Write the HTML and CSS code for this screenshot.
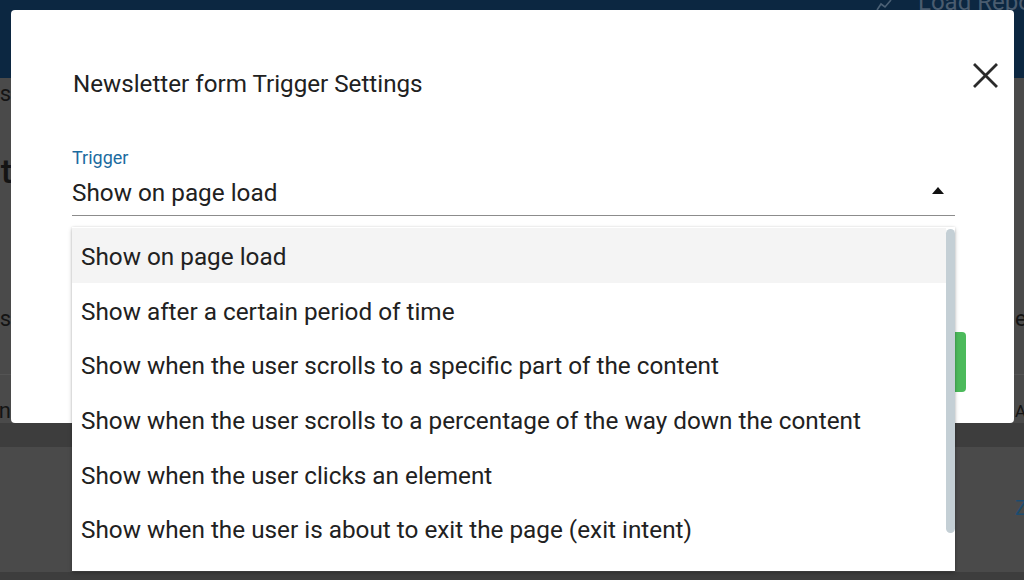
FILE: index.html
```html
<!DOCTYPE html>
<html lang="en">
<head>
<meta charset="utf-8">
<title>Newsletter form Trigger Settings</title>
<link rel="stylesheet" href="styles.css">
</head>
<body>
<div class="app">
  <header class="topbar">
    <svg class="report-icon" width="16" height="12" viewBox="0 0 16 12"><path d="M1 11 L5 5 L9 8 L15 1" fill="none" stroke="#4c6176" stroke-width="1.6"/></svg>
    <span class="report-text">Load Report</span>
  </header>
  <main class="content">
    <div class="row row-a"><span class="cut-left">Actions</span></div>
    <div class="row row-b"><span class="cut-left big">Content</span></div>
    <div class="row row-c"><span class="cut-left">Analysis</span><span class="cut-right">edit</span></div>
    <div class="row row-d"><span class="cut-left">Design</span><span class="cut-right small">All</span></div>
    <div class="band"></div>
    <div class="row row-e"><span class="spacer"></span><span class="cut-right link">Zoom</span></div>
    <div class="band bottom"></div>
  </main>
</div>

<div class="modal">
  <h2 class="modal-title">Newsletter form Trigger Settings</h2>
  <button class="close" aria-label="Close">
    <svg width="25" height="25" viewBox="0 0 25 25"><path d="M2 2 L23 23 M23 2 L2 23" stroke="#2b2b2b" stroke-width="2.8" stroke-linecap="square"/></svg>
  </button>
  <div class="field">
    <label class="field-label">Trigger</label>
    <div class="select">
      <span class="select-value">Show on page load</span>
      <span class="arrow"></span>
    </div>
    <div class="menu">
      <ul class="menu-list">
        <li class="menu-item active">Show on page load</li>
        <li class="menu-item">Show after a certain period of time</li>
        <li class="menu-item">Show when the user scrolls to a specific part of the content</li>
        <li class="menu-item">Show when the user scrolls to a percentage of the way down the content</li>
        <li class="menu-item">Show when the user clicks an element</li>
        <li class="menu-item">Show when the user is about to exit the page (exit intent)</li>
      </ul>
      <div class="scroll-track"><div class="scroll-thumb"></div></div>
    </div>
  </div>
  <div class="modal-footer">
    <button class="save">Save</button>
  </div>
</div>
</body>
</html>
```

FILE: styles.css
```css
* { box-sizing: border-box; }
html, body { margin: 0; padding: 0; }
body {
  width: 1024px;
  height: 580px;
  overflow: hidden;
  font-family: Roboto, "Liberation Sans", Arial, sans-serif;
  background: #4a4a4a;
  position: relative;
}
.app { display: flex; flex-direction: column; height: 580px; }
.topbar {
  height: 78px;
  background: #0c2741;
  display: flex;
  justify-content: flex-end;
  align-items: flex-start;
  gap: 26px;
  overflow: hidden;
}
.report-icon { margin-top: -1px; }
.report-text {
  font-size: 24px;
  line-height: 24px;
  color: #4a5c6f;
  margin-top: -10px;
  white-space: nowrap;
  width: 106px;
  overflow: hidden;
}
.content { flex: 1; display: flex; flex-direction: column; }
.row {
  display: flex;
  justify-content: space-between;
  align-items: flex-start;
  color: #141414;
  font-size: 22px;
  line-height: 26px;
}
.row-a { height: 62px; padding-top: 3px; }
.row-b { height: 88px; padding-top: 14px; }
.row-c { height: 147px; padding-top: 78px; border-bottom: 1px solid #545454; }
.row-d { height: 48px; padding-top: 23px; }
.row-e { height: 125px; padding-top: 48px; }
.band { height: 24px; background: #3d3d3d; }
.band.bottom { height: 8px; flex: 1; }
.cut-left {
  width: 11px;
  overflow: hidden;
  display: flex;
  justify-content: flex-end;
  white-space: nowrap;
}
.cut-left.big { font-size: 34px; line-height: 34px; font-weight: 500; width: 12px; }
.cut-right {
  width: 9px;
  overflow: hidden;
  white-space: nowrap;
}
.cut-right.small { font-size: 17px; }
.cut-right.link { color: #1c4c6f; font-size: 20px; }
.spacer { width: 11px; }

.modal {
  position: absolute;
  top: 10px;
  left: 11px;
  width: 1003px;
  height: 413px;
  background: #fff;
  border-radius: 4px;
  padding: 60px 59px 0 61px;
  display: flex;
  flex-direction: column;
  z-index: 1;
}
.modal-title {
  margin: 0;
  font-size: 24.2px;
  line-height: 28px;
  font-weight: 400;
  color: #212121;
  padding-left: 1px;
}
.close {
  position: absolute;
  top: 53px;
  right: 16px;
  width: 25px;
  height: 25px;
  padding: 0;
  border: 0;
  background: none;
  display: flex;
}
.field { position: relative; margin-top: 50px; }
.field-label {
  display: block;
  font-size: 18px;
  line-height: 20px;
  color: #1c6b9f;
}
.select {
  margin-top: 11px;
  display: flex;
  justify-content: space-between;
  align-items: center;
  padding-bottom: 8px;
  border-bottom: 1px solid #8c8c8c;
}
.select-value {
  font-size: 24.3px;
  line-height: 28px;
  color: #212121;
}
.arrow {
  width: 0;
  height: 0;
  border-left: 6px solid transparent;
  border-right: 6px solid transparent;
  border-bottom: 7px solid #111;
  margin-right: 11px;
  margin-top: -6px;
}
.menu {
  position: absolute;
  top: 79px;
  left: 0;
  right: 0;
  height: 344px;
  background: #fff;
  display: flex;
  box-shadow: 0 2px 4px rgba(0,0,0,0.25), 0 0 2px rgba(0,0,0,0.12);
  z-index: 2;
}
.menu-list {
  flex: 1;
  list-style: none;
  margin: 0;
  padding: 1px 0 0;
}
.menu-item {
  height: 54.7px;
  padding: 3px 9px 0;
  display: flex;
  align-items: center;
  font-size: 24.3px;
  line-height: 28px;
  color: #212121;
  white-space: nowrap;
}
.menu-item.active { background: #f4f4f4; }
.scroll-track { width: 9px; padding-top: 2px; }
.scroll-thumb {
  width: 9px;
  height: 304px;
  background: #c4cfd5;
  border-radius: 5px;
}
.modal-footer {
  display: flex;
  justify-content: flex-end;
  margin-top: 116px;
  margin-right: -11px;
}
.save {
  width: 120px;
  height: 60px;
  border: 0;
  border-radius: 4px;
  background: #4cba5b;
  color: #fff;
  font-size: 18px;
  font-family: inherit;
}
```
